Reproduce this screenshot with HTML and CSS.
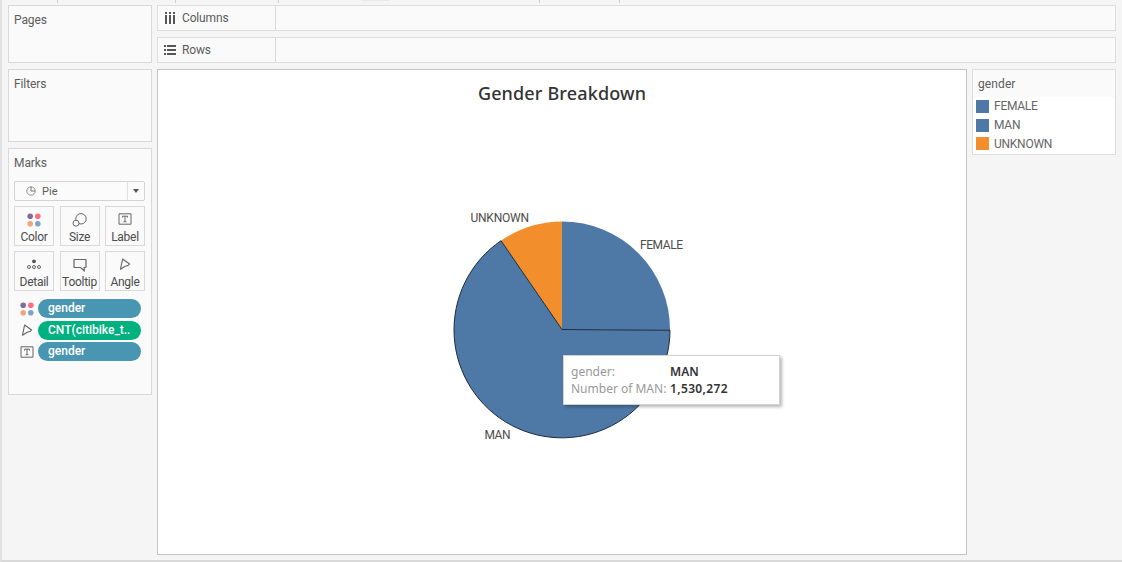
FILE: index.html
```html
<!DOCTYPE html>
<html lang="en">
<head>
<meta charset="utf-8">
<title>Gender Breakdown</title>
<link rel="stylesheet" href="styles.css">
</head>
<body>
<svg class="defs" width="0" height="0" aria-hidden="true">
  <symbol id="dots" viewBox="0 0 14 14"><circle cx="3.2" cy="3.2" r="2.8" fill="#856a96"/><circle cx="10.8" cy="3.2" r="2.8" fill="#fb6e7f"/><circle cx="3.2" cy="10.7" r="2.8" fill="#f2a47b"/><circle cx="10.8" cy="10.7" r="2.8" fill="#7fa3cb"/></symbol>
  <symbol id="text-box" viewBox="0 0 14 12"><path d="M1 .8h12v10.4H1zM4.5 4.5V3.2h5v1.3M7 3.2v5.5M5.6 8.7h2.8" fill="none" stroke="#666"/></symbol>
  <symbol id="angle" viewBox="0 0 12 12"><path d="M1.5 11.2 3.6 1 10.6 6Q9.5 7.9 6.2 8.2Z" fill="none" stroke="#666" stroke-width="1.1" stroke-linejoin="round"/></symbol>
</svg>
<div class="workspace">
  <div class="toolbar-edge"><i class="tick t1"></i><i class="tick t2"></i><i class="tick t3"></i><i class="hint"></i><i class="tick t4"></i><i class="tick t5"></i></div>
  <aside class="sidebar">
    <section class="card pages"><h2>Pages</h2></section>
    <section class="card filters"><h2>Filters</h2></section>
    <section class="card marks">
      <h2>Marks</h2>
      <div class="mark-type">
        <svg width="10" height="10" viewBox="0 0 10 10"><circle cx="5" cy="5" r="4.2" fill="none" stroke="#888" stroke-width=".9"/><path d="M5 .8V5h4.2" fill="none" stroke="#777"/></svg>
        <span>Pie</span><b class="drop"><i></i></b>
      </div>
      <div class="buttons">
        <div class="button"><svg width="14" height="14"><use href="#dots"/></svg><span>Color</span></div>
        <div class="button"><svg width="16" height="14" viewBox="0 0 16 14"><g fill="#fafafa" stroke="#666"><circle cx="9" cy="5.8" r="5.2"/><circle cx="4" cy="10.2" r="3"/></g></svg><span>Size</span></div>
        <div class="button"><svg width="14" height="12"><use href="#text-box"/></svg><span>Label</span></div>
        <div class="button"><svg width="14" height="12" viewBox="0 0 14 12"><circle cx="7" cy="3.3" r="1.9" fill="#555"/><g fill="none" stroke="#666"><circle cx="2" cy="9" r="1.5"/><circle cx="7" cy="9" r="1.5"/><circle cx="12" cy="9" r="1.5"/></g></svg><span>Detail</span></div>
        <div class="button"><svg width="14" height="14" viewBox="0 0 14 14"><path d="M1.5 1.5h11q.5 0 .5.5v7q0 .5-.5.5h-1.300v3.300L7.500 9.500h-6Q1 9.500 1 9v-7Q1 1.500 1.500 1.500Z" fill="none" stroke="#666" stroke-width="1.2"/></svg><span>Tooltip</span></div>
        <div class="button"><svg width="12" height="12"><use href="#angle"/></svg><span>Angle</span></div>
      </div>
      <div class="pills">
        <div class="pill-row"><svg width="14" height="14"><use href="#dots"/></svg><span class="pill dimension">gender</span></div>
        <div class="pill-row"><svg width="12" height="12"><use href="#angle"/></svg><span class="pill measure">CNT(citibike_t..</span></div>
        <div class="pill-row"><svg width="14" height="12"><use href="#text-box"/></svg><span class="pill dimension">gender</span></div>
      </div>
    </section>
  </aside>
  <main class="main">
    <div class="shelf">
      <div class="shelf-name"><svg width="12" height="12" viewBox="0 0 12 12"><path d="M2 0v2M6 0v2M10 0v2M2 3v9M6 3v9M10 3v9" stroke="#555" stroke-width="2"/></svg><span>Columns</span></div>
    </div>
    <div class="shelf">
      <div class="shelf-name"><svg width="12" height="12" viewBox="0 0 12 12"><path d="M0 2h2M0 6h2M0 10h2M3 2h9M3 6h9M3 10h9" stroke="#555" stroke-width="2"/></svg><span>Rows</span></div>
    </div>
    <div class="content">
      <section class="view">
        <h1><span>Gender Breakdown</span></h1>
        <svg class="chart" width="808" height="448" viewBox="158 106 808 448">
          <path d="M562 329.5V221.5A108 108 0 0 1 670 330.3Z" fill="#4e79a7"/>
          <path d="M562 329.5 501 240.7A108 108 0 0 1 562 221.5Z" fill="#f28e2b"/>
          <path d="M562 329.5 670 330.3A108 108 0 1 1 501 240.7Z" fill="#4e79a7" stroke="#1d2b3a"/>
          <g class="slice-label">
            <text x="470.5" y="221.5" textLength="58.5">UNKNOWN</text>
            <text x="640" y="249" textLength="43">FEMALE</text>
            <text x="484.5" y="439" textLength="26">MAN</text>
          </g>
        </svg>
        <div class="tooltip">
          <span>gender:</span><b>MAN</b>
          <span>Number of MAN:</span><b>1,530,272</b>
        </div>
      </section>
      <aside class="legend">
        <h2>gender</h2>
        <ul><li><i class="blue"></i>FEMALE</li><li><i class="blue"></i>MAN</li><li><i class="orange"></i>UNKNOWN</li></ul>
      </aside>
    </div>
  </main>
</div>
</body>
</html>
```
FILE: styles.css
```css
* { box-sizing: border-box; }
body { margin: 0; background: #f5f5f5; color: #5c5c5c; font: 12px/16px Roboto, sans-serif; }
h1, h2, ul { margin: 0; padding: 0; font-weight: 400; }
svg { display: block; flex: none; }
.defs { position: absolute; }
.workspace { position: relative; display: flex; gap: 5px; width: 1122px; height: 562px; padding: 5px 6px 0 6px; border-left: 2px solid #e2e2e2; border-bottom: 2px solid #d9d9d9; overflow: hidden; }
.toolbar-edge { position: absolute; top: 0; left: -2px; width: 100%; height: 3px; }
.tick { position: absolute; top: 0; width: 1px; height: 3px; background: #d0d0d0; }
.t1 { left: 57px; }
.t2 { left: 175px; }
.t3 { left: 278px; }
.t4 { left: 539px; }
.t5 { left: 619px; }
.hint { position: absolute; left: 361px; top: 0; width: 28px; height: 1px; background: #e9e9e9; }

.sidebar { display: flex; flex-direction: column; gap: 6px; width: 144px; flex: none; }
.card { background: #fafafa; border: 1px solid #d9d9d9; padding: 6px 5px; }
h2 { font-size: 12px; line-height: 16px; letter-spacing: -.1px; }
.pages { height: 58px; }
.filters { height: 73px; }
.marks { height: 247px; padding-right: 6px; }
.mark-type { display: flex; align-items: center; height: 20px; margin-top: 10px; border: 1px solid #d4d4d4; border-radius: 2px; padding-left: 11px; font-size: 11px; background: #fbfbfb; }
.mark-type span { margin: 1px 0 0 6px; letter-spacing: .1px; }
.drop { display: flex; align-items: center; justify-content: center; width: 17px; height: 18px; margin-left: auto; border-left: 1px solid #e0e0e0; }
.drop i { border: 3.5px solid transparent; border-top: 4px solid #555; border-bottom: 0; }
.buttons { display: grid; grid-template-columns: repeat(3, 40px); justify-content: space-between; row-gap: 5px; margin-top: 5px; }
.button { display: flex; flex-direction: column; align-items: center; justify-content: space-between; height: 40px; padding: 6px 0 0; border: 1px solid #d9d9d9; color: #4c4c4c; white-space: nowrap; line-height: 15px; letter-spacing: -.28px; }
.pills { display: flex; flex-direction: column; gap: 2.5px; margin-top: 8px; }
.pill-row { display: grid; grid-template-columns: 14px 103px; column-gap: 4px; align-items: center; justify-items: center; margin-left: 6px; }
.pill { width: 103px; height: 19px; border-radius: 10px; padding-left: 10px; color: #fff; font-weight: 500; line-height: 19px; letter-spacing: 0; white-space: nowrap; }
.dimension { background: #4996b2; }
.measure { background: #00b180; }

.main { display: flex; flex-direction: column; gap: 6px; flex: 1; }
.shelf { height: 26px; flex: none; border: 1px solid #dedede; background: #fafafa; }
.shelf-name { display: flex; align-items: center; gap: 6px; width: 118px; height: 24px; padding-left: 6px; border-right: 1px solid #d9d9d9; letter-spacing: -.15px; }
.content { display: flex; align-items: flex-start; gap: 5px; }
.view { position: relative; width: 810px; height: 486px; border: 1px solid #c4c4c4; background: #fff; }
h1 { height: 36px; padding-top: 11px; color: #333; text-align: center; font: 500 18px/24px "Noto Sans", sans-serif; letter-spacing: .15px; }
.slice-label { font-size: 12px; fill: #4c4c4c; }
.tooltip { position: absolute; left: 405px; top: 285px; display: grid; grid-template-columns: 99px 1fr; align-content: center; width: 217px; height: 50px; padding: 0 7px; border: 1px solid #d2d2d2; background: #fff; box-shadow: 2px 2px 3px rgba(0,0,0,.28); color: #999; font: 12px/17px "Noto Sans", sans-serif; white-space: nowrap; }
.tooltip b { color: #333; font-weight: 600; letter-spacing: .35px; }
.tooltip b:nth-of-type(1) { letter-spacing: 0; }
.legend { width: 144px; height: 86px; border: 1px solid #dedede; background: #fff; }
.legend h2 { height: 27px; padding: 6px 5px; background: #fafafa; letter-spacing: .1px; }
.legend ul { list-style: none; }
.legend li { display: flex; align-items: center; gap: 5px; height: 18.7px; padding-left: 3px; color: #666; letter-spacing: -.25px; }
.legend i { width: 13px; height: 13px; }
.blue { background: #4e79a7; }
.orange { background: #f28e2b; }
```
